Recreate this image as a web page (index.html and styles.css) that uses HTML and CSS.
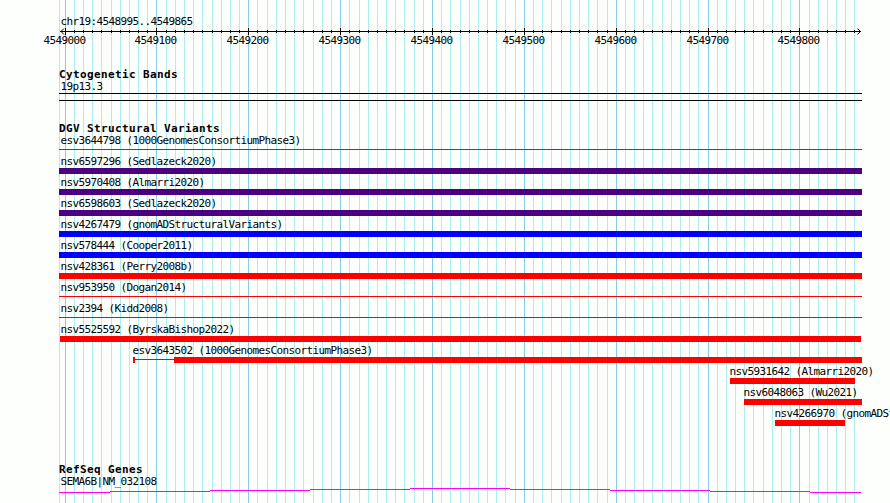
FILE: index.html
```html
<!DOCTYPE html>
<html lang="en">
<head>
    <meta charset="UTF-8">
    <title>chr19:4548995..4549865</title>
    <link rel="stylesheet" href="styles.css">
</head>
<body>
    <div class="browser">
        <svg class="grid" id="grid" width="890" height="503" shape-rendering="crispEdges"></svg>

        <div class="ruler">
            <div class="label">chr19:4548995..4549865</div>
            <svg class="axis" id="axis" width="890" height="22"></svg>
        </div>

        <div class="track cytoband">
            <h2>Cytogenetic Bands</h2>
            <div class="label">19p13.3</div>
            <div class="band"></div>
        </div>

        <div class="track variants">
            <h2>DGV Structural Variants</h2>
            <div id="variants"></div>
        </div>

        <div class="track genes">
            <h2>RefSeq Genes</h2>
            <div class="label">SEMA6B|NM_032108</div>
            <svg class="profile" width="803" height="6" shape-rendering="crispEdges">
                <path d="M0 4h51v1H0zM51 3h100v1H51zM151 2h100v1H151zM251 1h100v1H251zM351 0h100v1H351zM451 1h100v1H451zM551 2h100v1H551zM651 3h100v1H651zM751 4h51v1H751z"/>
            </svg>
        </div>
    </div>

    <script src="script.js"></script>
</body>
</html>
```
FILE: styles.css
```css
:root {
    --background: #fdfffc;
    --minor-line: #afeeee;
    --major-line: #87ceeb;
    --gain: #0000ff;
    --loss: #ff0000;
    --complex: #4b0082;
}

body {
    margin: 0;
    background: var(--background);
    color: #000;
    font-family: "DejaVu Sans Mono", monospace;
    font-size: 11px;
}

.browser {
    position: relative;
    z-index: 0;
    box-sizing: border-box;
    width: 890px;
    height: 503px;
    padding-top: 15px;
    overflow: hidden;
}

.grid {
    position: absolute;
    top: 0;
    left: 0;
    z-index: -1;
}

.minor {
    fill: var(--minor-line);
}

.major {
    fill: var(--major-line);
}

.label {
    height: 12px;
    padding-left: 1.5px;
    line-height: 14px;
    letter-spacing: -0.62px;
    white-space: nowrap;
}

.ruler .label {
    margin-left: 59px;
}

.axis {
    display: block;
}

.axis text {
    letter-spacing: -0.62px;
}

.axis path {
    fill: none;
    stroke: #000;
}

.track {
    margin-left: 59px;
}

h2 {
    height: 12px;
    margin: 0;
    font-size: 11px;
    line-height: 14px;
    letter-spacing: 0.38px;
}

.cytoband {
    margin-top: 19px;
}

.band {
    box-sizing: border-box;
    width: 803px;
    height: 8px;
    margin-top: 1px;
    border-top: 1px solid #000;
    border-bottom: 1px solid #000;
}

.variants {
    margin-top: 21px;
}

.variant {
    height: 21px;
}

.glyph {
    display: flex;
    height: 6px;
    margin-top: 1px;
}

.glyph div {
    flex: none;
}

.gain {
    background: var(--gain);
}

.loss {
    background: var(--loss);
}

.complex {
    background: var(--complex);
}

.glyph .thin {
    height: 1px;
    margin-top: 2px;
}

.genes {
    margin-top: 35px;
}

.profile {
    display: block;
    margin-top: 1px;
    fill: #ff00ff;
}
```
FILE: script.js
```js
const LEFT = 59;
const ORIGIN = 65.1;      // x of 4549000
const STEP = 9.1848;      // pixels per 10 bp

// each segment is [start, end, thin]
const variants = [
    { name: 'esv3644798 (1000GenomesConsortiumPhase3)', type: 'loss', segments: [[59, 862, true]] },
    { name: 'nsv6597296 (Sedlazeck2020)', type: 'complex', segments: [[59, 862]] },
    { name: 'nsv5970408 (Almarri2020)', type: 'complex', segments: [[59, 862]] },
    { name: 'nsv6598603 (Sedlazeck2020)', type: 'complex', segments: [[59, 862]] },
    { name: 'nsv4267479 (gnomADStructuralVariants)', type: 'gain', segments: [[59, 862]] },
    { name: 'nsv578444 (Cooper2011)', type: 'gain', segments: [[59, 862]] },
    { name: 'nsv428361 (Perry2008b)', type: 'loss', segments: [[59, 862]] },
    { name: 'nsv953950 (Dogan2014)', type: 'loss', segments: [[59, 862, true]] },
    { name: 'nsv2394 (Kidd2008)', type: 'loss', segments: [[59, 862, true]] },
    { name: 'nsv5525592 (ByrskaBishop2022)', type: 'loss', segments: [[60, 861]], labelX: 59 },
    { name: 'esv3643502 (1000GenomesConsortiumPhase3)', type: 'loss', segments: [[133, 135], [135, 174, true], [174, 862]], labelX: 131 },
    { name: 'nsv5931642 (Almarri2020)', type: 'loss', segments: [[730, 855]], labelX: 728 },
    { name: 'nsv6048063 (Wu2021)', type: 'loss', segments: [[744, 862]], labelX: 742 },
    { name: 'nsv4266970 (gnomADStructuralVariants)', type: 'loss', segments: [[775, 845]], labelX: 773 }
];

// grid lines and ruler ticks
let lines = '<rect class="minor" x="59" y="0" width="1" height="503"/>';
let axis = '<path shape-rendering="crispEdges" d="M60 4.5H861"/><path d="M64 1.5L61 4.5L64 7.5M857.5 1.5L860.5 4.5L857.5 7.5"/>';
for (let i = 0; i <= 86; i++) {
    const x = Math.floor(ORIGIN + i * STEP);
    const major = i % 10 === 0;
    lines += `<rect class="${major ? 'major' : 'minor'}" x="${x}" y="0" width="1" height="503"/>`;
    axis += `<path shape-rendering="crispEdges" d="M${x + 0.5} ${major ? '1V8' : '3V6'}"/>`;
    if (major) {
        axis += `<text x="${x - 21.5}" y="17">${4549000 + i * 10}</text>`;
    }
}
document.getElementById('grid').innerHTML = lines;
document.getElementById('axis').innerHTML = axis;

document.getElementById('variants').innerHTML = variants.map(v => {
    const start = v.segments[0][0];
    const bars = v.segments.map(([from, to, thin]) =>
        `<div class="${v.type}${thin ? ' thin' : ''}" style="width: ${to - from}px"></div>`).join('');
    return `<div class="variant">
        <div class="label" style="margin-left: ${(v.labelX || start) - LEFT}px">${v.name}</div>
        <div class="glyph" style="margin-left: ${start - LEFT}px">${bars}</div>
    </div>`;
}).join('');
```
